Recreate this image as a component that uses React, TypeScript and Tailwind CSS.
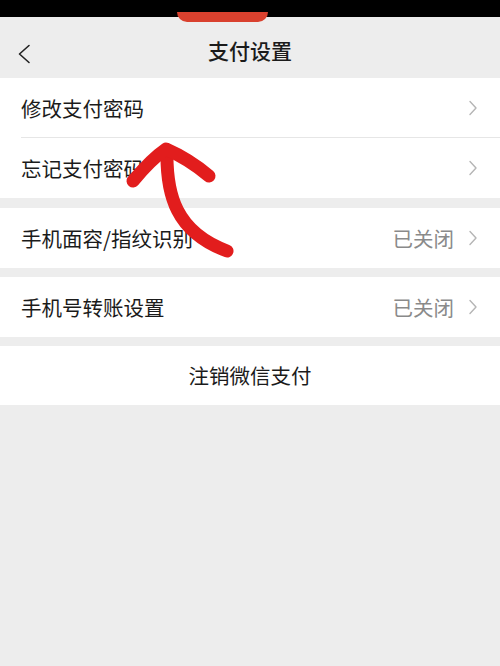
const font = { fontFamily: '"Noto Sans CJK SC", "Noto Sans", sans-serif' };

const Chevron = () => (
  <svg width="10" height="16" viewBox="0 0 10 16" className="shrink-0">
    <path d="M2 1.5 L8 8 L2 14.5" fill="none" stroke="#b5b5b5" strokeWidth="1.4" strokeLinecap="round" strokeLinejoin="round" />
  </svg>
);

interface RowProps {
  label: string;
  value?: string;
  divider?: boolean;
}

const Row = ({ label, value, divider }: RowProps) => (
  <div className="relative flex h-[60px] items-center bg-white pl-[21px] pr-[22px]">
    <span className="flex-1 text-[20.5px] text-[#1b1b1b]">{label}</span>
    {value && <span className="mr-[14px] text-[20.5px] text-[#8a8a8a]">{value}</span>}
    <Chevron />
    {divider && <div className="absolute bottom-0 left-[21px] right-0 h-px bg-[#e6e6e6]" />}
  </div>
);

export default function App() {
  return (
    <div className="relative flex h-[666px] w-[500px] flex-col overflow-hidden bg-[#ededed]" style={font}>
      <div className="relative h-[17px] bg-black">
        <div className="absolute left-[177px] top-[12px] h-[10px] w-[91px] rounded-b-full bg-[#d9412e]" />
      </div>
      <div className="relative flex h-[61px] items-center justify-center pt-[7px]">
        <svg width="14" height="20" viewBox="0 0 14 20" className="absolute left-[17px] top-[27px]">
          <path d="M12 1.5 L2.5 10 L12 18.5" fill="none" stroke="#222" strokeWidth="1.6" strokeLinecap="round" strokeLinejoin="round" />
        </svg>
        <span className="text-[21px] font-medium text-[#1b1b1b]">支付设置</span>
      </div>
      <Row label="修改支付密码" divider />
      <Row label="忘记支付密码" />
      <div className="h-[10px]" />
      <Row label="手机面容/指纹识别" value="已关闭" />
      <div className="h-[9px]" />
      <Row label="手机号转账设置" value="已关闭" />
      <div className="h-[9px]" />
      <div className="flex h-[59px] items-center justify-center bg-white">
        <span className="text-[20.5px] text-[#1b1b1b]">注销微信支付</span>
      </div>
      <svg width="500" height="666" viewBox="0 0 500 666" className="pointer-events-none absolute left-0 top-0">
        <g fill="none" stroke="#e21d1d" strokeWidth="13" strokeLinecap="round" strokeLinejoin="round">
          <path d="M167 150 C 166 195, 176 232, 227 251" />
          <path d="M133 181 C 143 169, 153 158, 166 149 C 182 156, 196 165, 209 176" />
        </g>
      </svg>
    </div>
  );
}
